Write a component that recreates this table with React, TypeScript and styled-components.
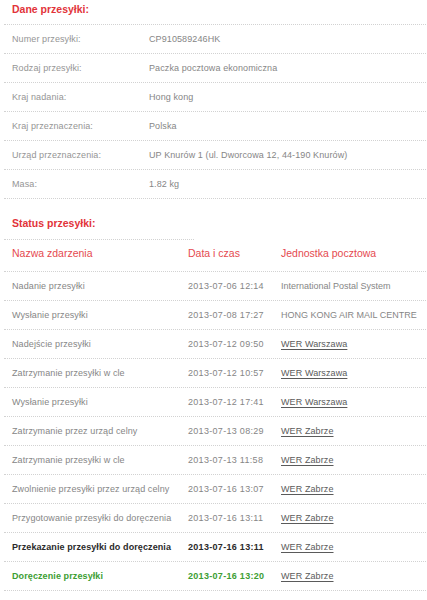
import React from "react";
import styled, { createGlobalStyle } from "styled-components";

const Global = createGlobalStyle`
  html, body { margin: 0; padding: 0; background: #fff; }
  body { font-family: "Liberation Sans", Arial, sans-serif; }
`;

const Wrapper = styled.div`
  width: 422px;
  padding: 0 1px 0 4px;
`;

const dotted = `
  border-bottom: 1px dotted #d2d2d2;
`;

const SectionTitle = styled.h2<{ $short?: boolean; $top: number; $bottom: number }>`
  margin: 0;
  width: ${(p) => (p.$short ? "174px" : "auto")};
  padding: ${(p) => p.$top}px 8px ${(p) => p.$bottom}px;
  font-size: 10.5px;
  font-weight: bold;
  line-height: 18px;
  color: #e2333a;
  ${dotted}
`;

const InfoRow = styled.div`
  display: grid;
  grid-template-columns: 137px 1fr;
  align-items: center;
  height: 28px;
  padding: 0 8px;
  font-size: 9px;
  letter-spacing: 0.1px;
  ${dotted}
`;

const Label = styled.span`
  color: #959595;
`;

const Value = styled.span`
  color: #868686;
`;

const EventRow = styled.div<{ $variant?: "normal" | "bold" | "green" }>`
  display: grid;
  grid-template-columns: 176px 93px 1fr;
  align-items: center;
  height: 28px;
  padding: 0 8px;
  font-size: 9px;
  letter-spacing: 0.1px;
  white-space: nowrap;
  ${dotted}
  font-weight: ${(p) => (p.$variant === "bold" || p.$variant === "green" ? "bold" : "normal")};
  color: ${(p) =>
    p.$variant === "bold" ? "#2a2a2a" : p.$variant === "green" ? "#3d9e33" : "#868686"};
`;

const HeaderRow = styled.div`
  display: grid;
  grid-template-columns: 176px 93px 1fr;
  padding: 4px 8px 9px;
  font-size: 10.5px;
  line-height: 18px;
  color: #e54a4f;
  ${dotted}
`;

const DateCell = styled.span`
  letter-spacing: 0.3px;
`;

const Unit = styled.span`
  font-weight: normal;
  letter-spacing: 0;
  color: #868686;
`;

const UnitLink = styled.a`
  font-weight: normal;
  color: #5a5a5a;
  text-decoration: underline;
  text-underline-offset: 2px;
`;

const info: [string, string][] = [
  ["Numer przesyłki:", "CP910589246HK"],
  ["Rodzaj przesyłki:", "Paczka pocztowa ekonomiczna"],
  ["Kraj nadania:", "Hong kong"],
  ["Kraj przeznaczenia:", "Polska"],
  ["Urząd przeznaczenia:", "UP Knurów 1 (ul. Dworcowa 12, 44-190 Knurów)"],
  ["Masa:", "1.82 kg"],
];

type Ev = { name: string; date: string; unit: string; link?: boolean; variant?: "normal" | "bold" | "green" };

const events: Ev[] = [
  { name: "Nadanie przesyłki", date: "2013-07-06 12:14", unit: "International Postal System" },
  { name: "Wysłanie przesyłki", date: "2013-07-08 17:27", unit: "HONG KONG AIR MAIL CENTRE" },
  { name: "Nadejście przesyłki", date: "2013-07-12 09:50", unit: "WER Warszawa", link: true },
  { name: "Zatrzymanie przesyłki w cle", date: "2013-07-12 10:57", unit: "WER Warszawa", link: true },
  { name: "Wysłanie przesyłki", date: "2013-07-12 17:41", unit: "WER Warszawa", link: true },
  { name: "Zatrzymanie przez urząd celny", date: "2013-07-13 08:29", unit: "WER Zabrze", link: true },
  { name: "Zatrzymanie przesyłki w cle", date: "2013-07-13 11:58", unit: "WER Zabrze", link: true },
  { name: "Zwolnienie przesyłki przez urząd celny", date: "2013-07-16 13:07", unit: "WER Zabrze", link: true },
  { name: "Przygotowanie przesyłki do doręczenia", date: "2013-07-16 13:11", unit: "WER Zabrze", link: true },
  { name: "Przekazanie przesyłki do doręczenia", date: "2013-07-16 13:11", unit: "WER Zabrze", link: true, variant: "bold" },
  { name: "Doręczenie przesyłki", date: "2013-07-16 13:20", unit: "WER Zabrze", link: true, variant: "green" },
];

export default function App() {
  return (
    <Wrapper>
      <Global />
      <SectionTitle $top={0} $bottom={6}>Dane przesyłki:</SectionTitle>
      {info.map(([l, v]) => (
        <InfoRow key={l}>
          <Label>{l}</Label>
          <Value>{v}</Value>
        </InfoRow>
      ))}
      <SectionTitle $short $top={15} $bottom={7}>Status przesyłki:</SectionTitle>
      <HeaderRow>
        <span>Nazwa zdarzenia</span>
        <span>Data i czas</span>
        <span>Jednostka pocztowa</span>
      </HeaderRow>
      {events.map((e, i) => (
        <EventRow key={i} $variant={e.variant}>
          <span>{e.name}</span>
          <DateCell>{e.date}</DateCell>
          {e.link ? <UnitLink href="#">{e.unit}</UnitLink> : <Unit>{e.unit}</Unit>}
        </EventRow>
      ))}
    </Wrapper>
  );
}
